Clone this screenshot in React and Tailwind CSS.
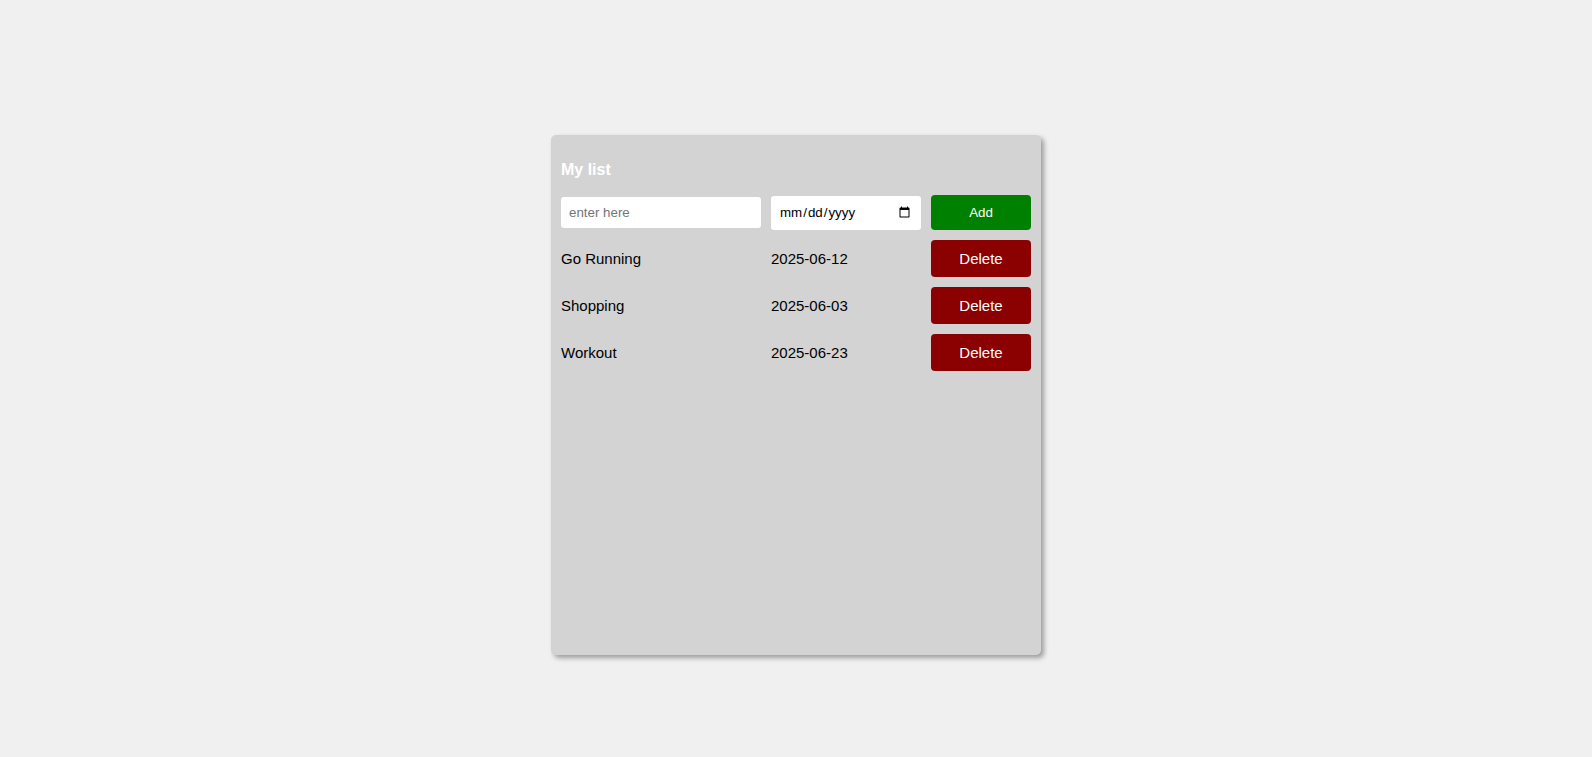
import { useState } from "react";

const initialItems = [
  { id: 1, name: "Go Running", date: "2025-06-12" },
  { id: 2, name: "Shopping", date: "2025-06-03" },
  { id: 3, name: "Workout", date: "2025-06-23" },
];

export default function App() {
  const [items, setItems] = useState(initialItems);
  const [name, setName] = useState("");
  const [date, setDate] = useState("");

  const addItem = () => {
    if (!name || !date) return;
    setItems([...items, { id: Date.now(), name, date }]);
    setName("");
    setDate("");
  };

  const deleteItem = id => setItems(items.filter(item => item.id !== id));

  return (
    <div className="min-h-screen bg-[#f0f0f0] pt-[135px] font-['Liberation_Sans',Arial,sans-serif]">
      <div className="mx-auto w-[490px] h-[520px] p-[10px] bg-[#d3d3d3] rounded-[5px] shadow-[3px_3px_5px_rgba(0,0,0,0.35)]">
        <h3 className="mt-[16px] mb-[16px] text-[16px] leading-[18px] font-bold text-white">My list</h3>

        <div className="grid grid-cols-[200px_150px_100px] gap-x-[10px] items-center h-[35px]">
          <input
            type="text"
            placeholder="enter here"
            value={name}
            onChange={e => setName(e.target.value)}
            className="h-[31px] px-[8px] bg-white rounded-[3px] text-[13.33px] text-black placeholder:text-[#757575] outline-none"
          />
          <input
            type="date"
            value={date}
            onChange={e => setDate(e.target.value)}
            className="h-[34px] pl-[8px] pr-[8px] bg-white rounded-[3px] text-[13.33px] text-black outline-none"
          />
          <button onClick={addItem} className="h-[35px] bg-[#008000] text-white text-[13.33px] font-medium rounded-[4px] cursor-pointer">
            Add
          </button>
        </div>

        <div className="flex flex-col gap-[10px] mt-[10px]">
          {items.map(item => (
            <div key={item.id} className="grid grid-cols-[200px_150px_100px] gap-x-[10px] items-center h-[37px] text-[15px] text-black">
              <span className="pt-[2px]">{item.name}</span>
              <span className="pt-[2px]">{item.date}</span>
              <button onClick={() => deleteItem(item.id)} className="h-[37px] pt-[2px] bg-[#8b0000] text-white text-[15px] rounded-[4px] cursor-pointer">
                Delete
              </button>
            </div>
          ))}
        </div>
      </div>
    </div>
  );
}
